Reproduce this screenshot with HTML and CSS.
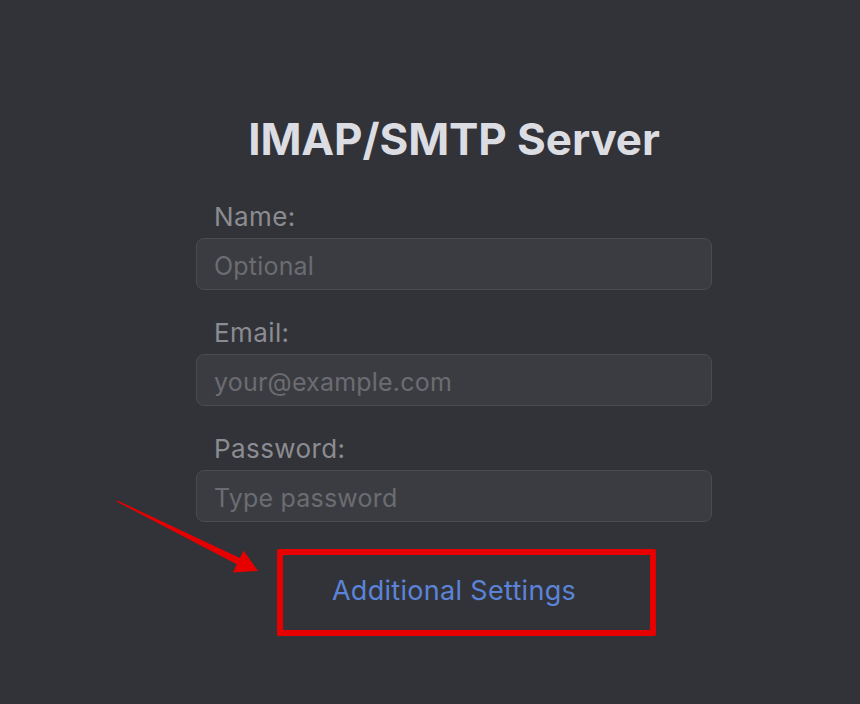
FILE: index.html
```html
<!DOCTYPE html>
<html lang="en">
<head>
<meta charset="utf-8">
<title>IMAP/SMTP Server</title>
<link rel="stylesheet" href="styles.css">
</head>
<body>
<main class="page">
  <form class="form">
    <h1 class="title">IMAP/SMTP Server</h1>
    <div class="field">
      <label class="label" for="name">Name:</label>
      <input class="input" id="name" type="text" placeholder="Optional">
    </div>
    <div class="field">
      <label class="label" for="email">Email:</label>
      <input class="input" id="email" type="email" placeholder="your@example.com">
    </div>
    <div class="field">
      <label class="label" for="pw">Password:</label>
      <input class="input" id="pw" type="password" placeholder="Type password">
    </div>
    <div class="more">
      <a class="link" href="#">Additional Settings</a>
    </div>
  </form>
  <div class="highlight"></div>
  <svg class="arrow" width="860" height="704" viewBox="0 0 860 704">
    <polygon fill="#e60000" points="117,500.3 239.9,558.1 243.6,550.4 258,571 233,572.5 236.7,564.3 117,501.7"/>
  </svg>
</main>
</body>
</html>
```

FILE: styles.css
```css
html, body {
  margin: 0;
  padding: 0;
  background: #323338;
  height: 100%;
}
body {
  font-family: Inter, "Noto Sans", "Liberation Sans", sans-serif;
  overflow: hidden;
}
.page {
  position: relative;
  width: 860px;
  height: 704px;
}
.form {
  width: 516px;
  margin-left: 196px;
  padding-top: 111px;
  display: flex;
  flex-direction: column;
}
.title {
  margin: 0 0 35px;
  text-align: center;
  font-size: 44px;
  font-weight: 700;
  line-height: 56px;
  color: #dcdde2;
  letter-spacing: -0.1px;
}
.field {
  display: flex;
  flex-direction: column;
  margin-bottom: 28px;
}
.label {
  padding-left: 18px;
  font-size: 26px;
  line-height: 30px;
  letter-spacing: 0.4px;
  color: #8b8c91;
  margin-bottom: 6px;
}
.input {
  box-sizing: border-box;
  height: 52px;
  width: 100%;
  margin: 0;
  padding: 3px 17px 0;
  background: #3b3c41;
  border: 1px solid #4b4c51;
  border-radius: 8px;
  font-family: inherit;
  font-size: 25px;
  letter-spacing: 0.2px;
  color: #dcdde2;
  outline: none;
}
.input::placeholder {
  color: #6b6c71;
}
.more {
  display: flex;
  justify-content: center;
  padding-top: 26px;
}
.link {
  font-size: 27px;
  line-height: 30px;
  letter-spacing: 0.3px;
  color: #5b84d8;
  text-decoration: none;
}
.highlight {
  position: absolute;
  left: 277px;
  top: 549px;
  width: 367px;
  height: 75px;
  border: 6px solid #e60000;
  border-radius: 2px;
}
.arrow {
  position: absolute;
  left: 0;
  top: 0;
  pointer-events: none;
}
```
